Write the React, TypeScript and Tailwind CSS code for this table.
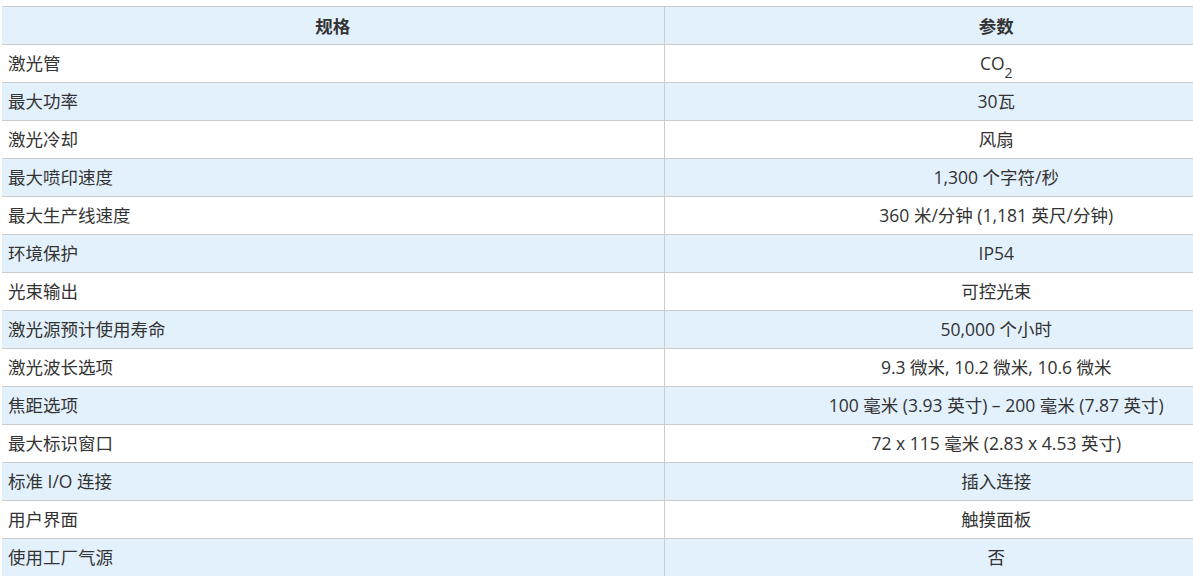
const rows: [string, React.ReactNode][] = [
  ['激光管', <>CO<sub className="text-[14px] align-[-4px]">2</sub></>],
  ['最大功率', '30瓦'],
  ['激光冷却', '风扇'],
  ['最大喷印速度', '1,300 个字符/秒'],
  ['最大生产线速度', '360 米/分钟 (1,181 英尺/分钟)'],
  ['环境保护', 'IP54'],
  ['光束输出', '可控光束'],
  ['激光源预计使用寿命', '50,000 个小时'],
  ['激光波长选项', '9.3 微米, 10.2 微米, 10.6 微米'],
  ['焦距选项', '100 毫米 (3.93 英寸) – 200 毫米 (7.87 英寸)'],
  ['最大标识窗口', '72 x 115 毫米 (2.83 x 4.53 英寸)'],
  ['标准 I/O 连接', '插入连接'],
  ['用户界面', '触摸面板'],
  ['使用工厂气源', '否'],
]

export default function App() {
  return (
    <div className="w-[1193px] h-[576px] overflow-hidden bg-white pt-[6px] pl-[2px] font-['Open_Sans','Noto_Sans_CJK_SC',sans-serif] text-[17.5px] text-[#333]">
      <table className="w-[1326px] border-collapse table-fixed">
        <thead>
          <tr className="bg-[#e3f1fd] h-[38px]">
            <th className="w-[662px] border-y border-[#ccc] font-bold text-center leading-[36px]">规格</th>
            <th className="border-y border-l border-[#ccc] font-bold text-center leading-[36px]">参数</th>
          </tr>
        </thead>
        <tbody>
          {rows.map(([k, v], i) => (
            <tr key={k} className={`h-[38px] ${i % 2 === 1 ? 'bg-[#e3f1fd]' : 'bg-white'}`}>
              <td className="border-b border-[#ccc] px-[6px] py-0 text-left leading-[37px]">{k}</td>
              <td className="border-b border-l border-[#ccc] px-[6px] py-0 text-center leading-[37px]">{v}</td>
            </tr>
          ))}
        </tbody>
      </table>
    </div>
  )
}
